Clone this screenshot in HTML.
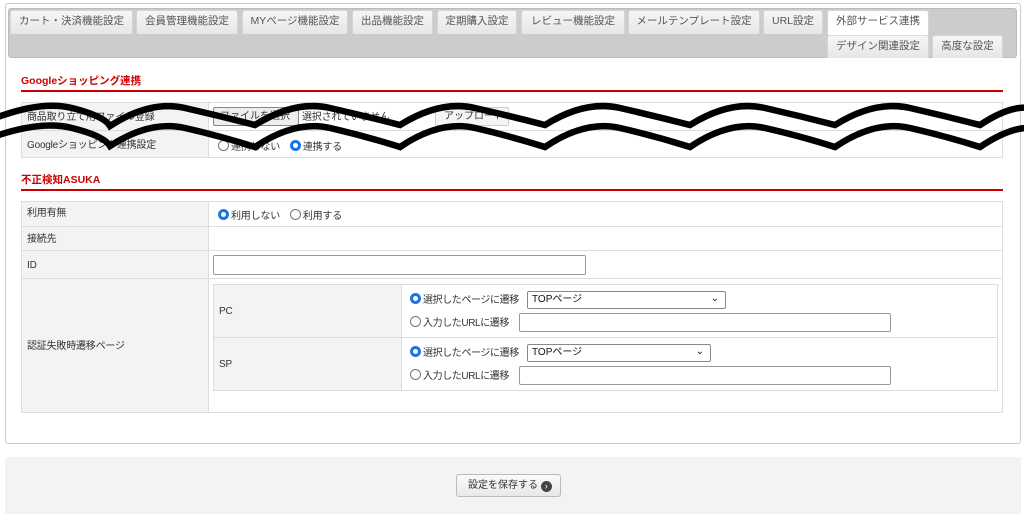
<!DOCTYPE html>
<html><head><meta charset="utf-8"><style>
*{box-sizing:border-box;margin:0;padding:0}
body{width:1024px;height:517px;background:#fff;font-family:"Liberation Sans","Noto Sans CJK JP",sans-serif;font-size:11px;color:#333;position:relative;overflow:hidden}
.a{position:absolute}
.panel{left:5px;top:3px;width:1016px;height:441px;border:1px solid #ccc;border-radius:3px;background:#fff}
.tabbar{left:8px;top:8px;width:1009px;height:50px;background:#ccc;border:1px solid #bbb;border-radius:3px}
.tab{position:absolute;top:10px;height:24px;background:linear-gradient(#f6f6f6,#e6e6e6);border:1px solid #d4d4d4;border-bottom:none;border-radius:3px 3px 0 0;color:#555;font-size:10.5px;text-align:center;line-height:21px;white-space:nowrap}
.tab.on{background:#fff}
.h{color:#c00;font-weight:bold;font-size:10.5px}
.rl{height:2px;background:#c00;left:21px;width:982px}
.cell{position:absolute;border:1px solid #ddd}
.lab{background:#f2f3f3}
.inp{position:absolute;border:1px solid #999;border-radius:2px;background:#fff}
.sel{position:absolute;border:1px solid #888;border-radius:2px;background:#fff;font-size:10px;line-height:14px;padding:1px 4px;color:#111;white-space:nowrap}
.rad{display:inline-block;width:11px;height:11px;border-radius:50%;border:1px solid #777;vertical-align:-1px;margin-right:2px;background:#fff}
.rad.on{border:3px solid #1a73e8}
.t{position:absolute;font-size:10px;line-height:13px;white-space:nowrap;letter-spacing:-0.2px}
.n{letter-spacing:-0.4px}
</style></head><body>
<div class="a panel"></div>
<div class="a tabbar"></div>
<div class="tab" style="left:10px;width:123px">カート・決済機能設定</div>
<div class="tab" style="left:136px;width:102px">会員管理機能設定</div>
<div class="tab" style="left:242px;width:106px">MYページ機能設定</div>
<div class="tab" style="left:352px;width:81px">出品機能設定</div>
<div class="tab" style="left:437px;width:80px">定期購入設定</div>
<div class="tab" style="left:521px;width:104px">レビュー機能設定</div>
<div class="tab" style="left:628px;width:132px">メールテンプレート設定</div>
<div class="tab" style="left:763px;width:60px">URL設定</div>
<div class="tab on" style="left:827px;width:102px;height:25px">外部サービス連携</div>
<div class="tab" style="left:827px;top:35px;width:102px;height:23px;border-top:1px solid #ddd">デザイン関連設定</div>
<div class="tab" style="left:932px;top:35px;width:71px;height:23px">高度な設定</div>

<div class="a h" style="left:21px;top:73px">Googleショッピング連携</div>
<div class="a rl" style="top:90px"></div>
<div class="cell lab" style="left:21px;top:102px;width:188px;height:29px"></div>
<div class="cell" style="left:208px;top:102px;width:795px;height:29px"></div>
<div class="cell lab" style="left:21px;top:130px;width:188px;height:28px"></div>
<div class="cell" style="left:208px;top:130px;width:795px;height:28px"></div>
<div class="t" style="left:27px;top:111px">商品取り立て用ファイル登録</div>
<div class="a" style="left:213px;top:107px;width:86px;height:19px;border:1px solid #888;background:#eee;border-radius:2px;font-size:10px;line-height:17px;padding-left:6px;white-space:nowrap;overflow:hidden">ファイルを選択</div>
<div class="t" style="left:302px;top:111px">選択されていません</div>
<div class="a" style="left:435px;top:107px;width:74px;height:19px;border:1px solid #ccc;background:#f4f4f4;border-radius:2px;font-size:10px;line-height:17px;padding-left:8px;white-space:nowrap;overflow:hidden">アップロード</div>
<div class="t" style="left:27px;top:139px">Googleショッピング連携設定</div>
<div class="t" style="left:218px;top:140px"><span class="rad"></span>連携しない　<span class="rad on"></span>連携する</div>

<svg class="a" style="left:0;top:95px" width="1024" height="70" viewBox="0 95 1024 70">
<g fill="none" stroke="#000" stroke-width="6.5" stroke-linejoin="miter">
<path d="M-10 120 Q40 100 72 108 T110 126 Q150 100 185 108 T255 125 Q295 100 330 108 T400 125 Q440 100 475 108 T545 125 Q585 100 620 108 T690 125 Q730 100 765 108 T835 125 Q875 100 910 108 T980 125 Q1010 105 1030 108"/>
<path d="M-10 138 Q40 120 72 128 T110 146 Q150 120 185 128 T255 147 Q295 120 330 128 T400 147 Q440 120 475 128 T545 147 Q585 120 620 128 T690 147 Q730 120 765 128 T835 147 Q875 120 910 128 T980 147 Q1010 127 1030 128"/>
</g></svg>

<div class="a h" style="left:21px;top:172px">不正検知ASUKA</div>
<div class="a rl" style="top:189px"></div>

<div class="cell lab" style="left:21px;top:201px;width:188px;height:26px"></div>
<div class="cell" style="left:208px;top:201px;width:795px;height:26px"></div>
<div class="cell lab" style="left:21px;top:226px;width:188px;height:25px"></div>
<div class="cell" style="left:208px;top:226px;width:795px;height:25px"></div>
<div class="cell lab" style="left:21px;top:250px;width:188px;height:29px"></div>
<div class="cell" style="left:208px;top:250px;width:795px;height:29px"></div>
<div class="cell lab" style="left:21px;top:278px;width:188px;height:135px"></div>
<div class="cell" style="left:208px;top:278px;width:795px;height:135px"></div>
<div class="t" style="left:27px;top:207px">利用有無</div>
<div class="t" style="left:218px;top:209px"><span class="rad on"></span>利用しない　<span class="rad"></span>利用する</div>
<div class="t" style="left:27px;top:233px">接続先</div>
<div class="t" style="left:27px;top:259px">ID</div>
<div class="inp" style="left:213px;top:255px;width:373px;height:20px"></div>
<div class="t" style="left:27px;top:340px">認証失敗時遷移ページ</div>

<div class="cell lab" style="left:213px;top:284px;width:189px;height:54px"></div>
<div class="cell" style="left:401px;top:284px;width:597px;height:54px"></div>
<div class="cell lab" style="left:213px;top:337px;width:189px;height:54px"></div>
<div class="cell" style="left:401px;top:337px;width:597px;height:54px"></div>
<div class="t" style="left:219px;top:305px">PC</div>
<div class="t" style="left:219px;top:358px">SP</div>
<div class="t n" style="left:410px;top:293px"><span class="rad on"></span>選択したページに遷移</div>
<div class="sel" style="left:527px;top:291px;width:199px;height:18px">TOPページ<span style="position:absolute;right:6px;top:0;font-size:10px">&#8964;</span></div>
<div class="t n" style="left:410px;top:316px"><span class="rad"></span>入力したURLに遷移</div>
<div class="inp" style="left:519px;top:313px;width:372px;height:19px"></div>
<div class="t n" style="left:410px;top:346px"><span class="rad on"></span>選択したページに遷移</div>
<div class="sel" style="left:527px;top:344px;width:184px;height:18px">TOPページ<span style="position:absolute;right:6px;top:0;font-size:10px">&#8964;</span></div>
<div class="t n" style="left:410px;top:369px"><span class="rad"></span>入力したURLに遷移</div>
<div class="inp" style="left:519px;top:366px;width:372px;height:19px"></div>

<div class="a" style="left:5px;top:457px;width:1016px;height:57px;background:#f3f3f3"></div>
<div class="a" style="left:456px;top:474px;width:105px;height:23px;border:1px solid #bbb;border-radius:3px;background:linear-gradient(#fafafa,#e8e8e8);font-size:10px;line-height:21px;padding-left:11px;color:#333;white-space:nowrap">設定を保存する <span style="display:inline-block;width:11px;height:11px;border-radius:50%;background:#444;color:#fff;font-size:9px;line-height:10px;text-align:center;vertical-align:-1px">›</span></div>
</body></html>
